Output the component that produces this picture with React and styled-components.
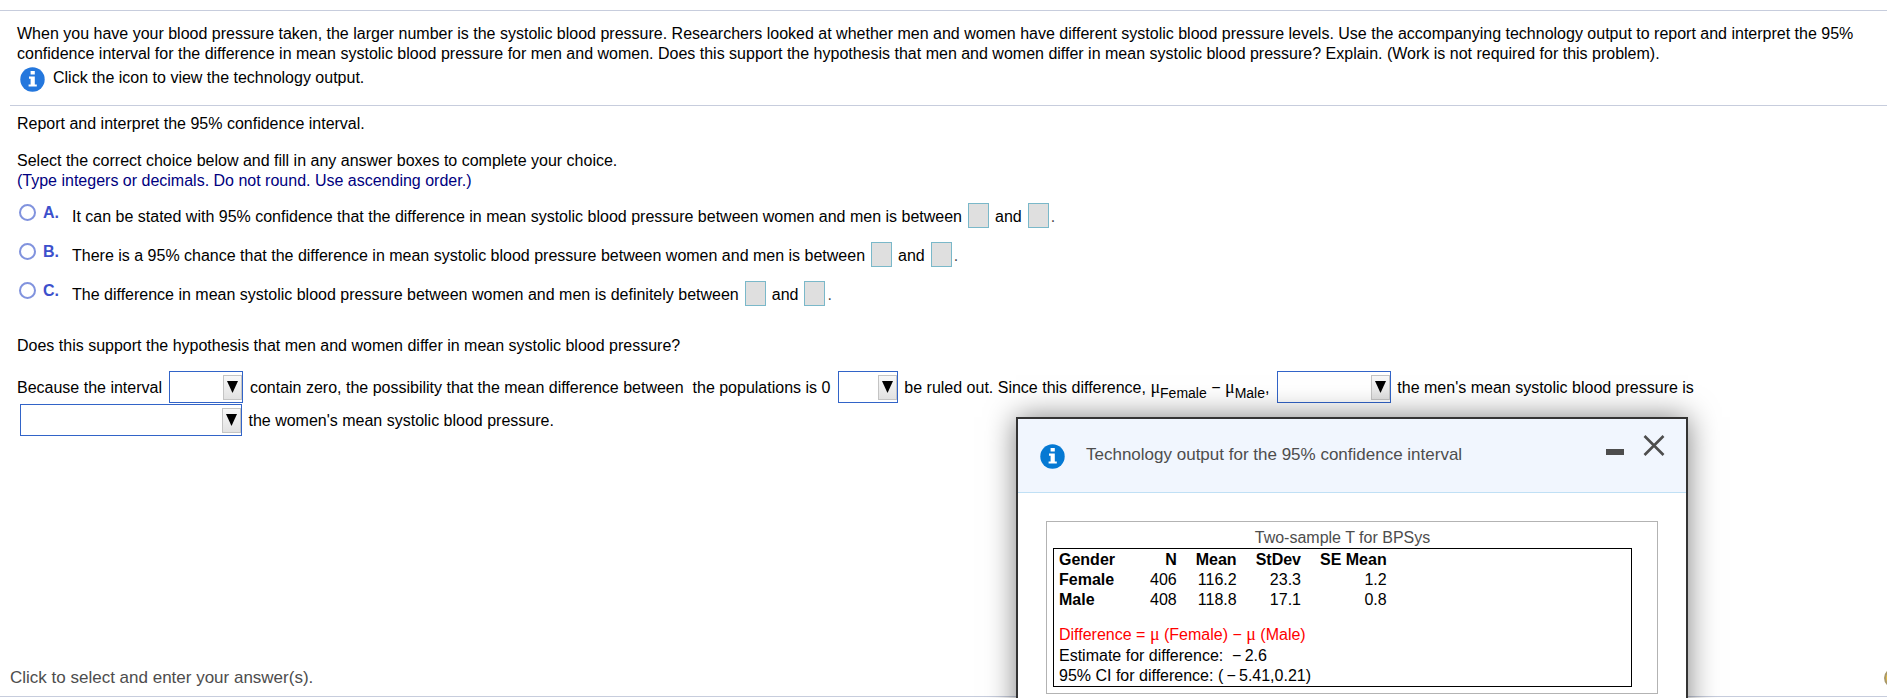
import React, { useState } from 'react';
import styled, { createGlobalStyle } from 'styled-components';

const choices = [
  {
    id: 'A',
    text: 'It can be stated with 95% confidence that the difference in mean systolic blood pressure between women and men is between',
  },
  {
    id: 'B',
    text: 'There is a 95% chance that the difference in mean systolic blood pressure between women and men is between',
  },
  {
    id: 'C',
    text: 'The difference in mean systolic blood pressure between women and men is definitely between',
  },
];

const columns = ['Gender', 'N', 'Mean', 'StDev', 'SE Mean'];

const rows = [
  ['Female', '406', '116.2', '23.3', '1.2'],
  ['Male', '408', '118.8', '17.1', '0.8'],
];

function InfoIcon({ color }) {
  return (
    <svg width="25" height="25" viewBox="0 0 25 25" aria-hidden="true">
      <circle cx="12.5" cy="12.5" r="12.2" fill={color} />
      <path
        d="M10.6 4h4.2v3.6h-4.2zM9 9.6h5.8v7.8h2v2.2H8.6v-2.2h2v-5.6H9z"
        fill="#fff"
      />
    </svg>
  );
}

function Dropdown({ size, label, options }) {
  return (
    <SelectBox $size={size}>
      <select aria-label={label} defaultValue="">
        <option value="" />
        {options.map((option) => (
          <option key={option}>{option}</option>
        ))}
      </select>
      <Arrow>
        <svg width="11" height="12" viewBox="0 0 11 12" aria-hidden="true">
          <path d="M0 0h11L5.5 12z" fill="#000" />
        </svg>
      </Arrow>
    </SelectBox>
  );
}

function OutputDialog({ onClose }) {
  return (
    <Dialog role="dialog" aria-labelledby="dialog-title">
      <DialogHeader>
        <InfoIcon color="#0579d3" />
        <h2 id="dialog-title">
          Technology output for the 95% confidence interval
        </h2>
        <DialogButton aria-label="Minimize">
          <svg width="18" height="24" viewBox="0 0 18 24">
            <path d="M0 14h18v6H0z" fill="#4d4d4d" />
          </svg>
        </DialogButton>
        <DialogButton aria-label="Close" onClick={onClose}>
          <svg width="22" height="24" viewBox="0 0 22 24">
            <path
              d="M1.5 1l19 19M20.5 1l-19 19"
              stroke="#4d4d4d"
              strokeWidth="2.6"
            />
          </svg>
        </DialogButton>
      </DialogHeader>
      <Figure>
        <figcaption>Two-sample T for BPSys</figcaption>
        <Output>
          <Table>
            <thead>
              <tr>
                {columns.map((name) => (
                  <th key={name} scope="col">
                    {name}
                  </th>
                ))}
              </tr>
            </thead>
            <tbody>
              {rows.map(([gender, ...values]) => (
                <tr key={gender}>
                  <th scope="row">{gender}</th>
                  {values.map((value) => (
                    <td key={value}>{value}</td>
                  ))}
                </tr>
              ))}
            </tbody>
          </Table>
          <Difference>
            Difference = <Mu>μ</Mu> (Female) − <Mu>μ</Mu> (Male)
          </Difference>
          <p>Estimate for difference:&nbsp; −&thinsp;2.6</p>
          <p>95% CI for difference: (&thinsp;−&thinsp;5.41,0.21)</p>
        </Output>
      </Figure>
    </Dialog>
  );
}

export default function App() {
  const [choice, setChoice] = useState('');
  const [open, setOpen] = useState(true);

  return (
    <>
      <GlobalStyle />
      <Page>
        <Problem>
          <p>
            When you have your blood pressure taken, the larger number is the
            systolic blood pressure. Researchers looked at whether men and women
            have different systolic blood pressure levels. Use the accompanying
            technology output to report and interpret the 95% confidence
            interval for the difference in mean systolic blood pressure for men
            and women. Does this support the hypothesis that men and women
            differ in mean systolic blood pressure? Explain. (Work is not
            required for this problem).
          </p>
          <IconLink>
            <button aria-label="View output" onClick={() => setOpen(true)}>
              <InfoIcon color="#2477dd" />
            </button>
            <span>Click the icon to view the technology output.</span>
          </IconLink>
        </Problem>

        <Question>
          <p>Report and interpret the 95% confidence interval.</p>
          <Directions>
            <p>
              Select the correct choice below and fill in any answer boxes to
              complete your choice.
            </p>
            <Hint>
              (Type integers or decimals. Do not round. Use ascending order.)
            </Hint>
          </Directions>

          <Choices>
            {choices.map(({ id, text }) => (
              <Choice key={id}>
                <input
                  type="radio"
                  name="choice"
                  id={`choice-${id}`}
                  checked={choice === id}
                  onChange={() => setChoice(id)}
                />
                <Letter htmlFor={`choice-${id}`}>{id}.</Letter>
                <Statement>
                  <label htmlFor={`choice-${id}`}>{text}</label>
                  <Answer aria-label={`${id} lower bound`} />
                  <span>and</span>
                  <Answer aria-label={`${id} upper bound`} />
                  <Period>.</Period>
                </Statement>
              </Choice>
            ))}
          </Choices>

          <p>
            Does this support the hypothesis that men and women differ in mean
            systolic blood pressure?
          </p>
          <Blanks>
            Because the interval{' '}
            <Dropdown
              size={74}
              label="Interval"
              options={['does', 'does not']}
            />{' '}
            contain zero, the possibility that the mean difference between&nbsp;
            the populations is 0{' '}
            <Dropdown size={60} label="Ruled out" options={['can', 'cannot']} />{' '}
            be ruled out. Since this difference, <Mu>μ</Mu>
            <sub>Female</sub> − <Mu>μ</Mu>
            <sub>Male</sub>,{' '}
            <Dropdown
              size={114}
              label="Support"
              options={['suggests', 'is negative']}
            />{' '}
            the men's mean systolic blood pressure is
            <br />
            <Dropdown
              size={222}
              label="Comparison"
              options={['greater than', 'less than']}
            />{' '}
            the women's mean systolic blood pressure.
          </Blanks>
        </Question>

        <Footer>
          <span>Click to select and enter your answer(s).</span>
          <HelpButton aria-label="Help" />
        </Footer>
        {open && <OutputDialog onClose={() => setOpen(false)} />}
      </Page>
    </>
  );
}

const GlobalStyle = createGlobalStyle`
  * {
    box-sizing: border-box;
  }

  body {
    margin: 0;
    background: #ffffff;
    color: #000000;
    font: 16px/20px 'Liberation Sans', Arial, sans-serif;
  }

  p, h2, figure {
    margin: 0;
  }

  button {
    padding: 0;
    border: none;
    background: transparent;
    cursor: pointer;
  }

  svg {
    display: block;
  }
`;

const Page = styled.div`
  display: flex;
  flex-direction: column;
  position: relative;
  min-height: 100vh;
  padding-top: 10px;
  overflow: hidden;
`;

const Problem = styled.section`
  padding: 13px 4px 13px 17px;
  border-top: 1px solid #c7cddd;
`;

const IconLink = styled.div`
  display: flex;
  gap: 8px;
  padding: 3px 3px 0;

  span {
    padding-top: 1px;
  }
`;

const Question = styled.section`
  flex: 1;
  margin-left: 10px;
  padding: 8px 4px 0 7px;
  border-top: 1px solid #c7cddd;
`;

const Directions = styled.div`
  padding-top: 17px;
`;

const Hint = styled.p`
  color: #000080;
`;

const Choices = styled.div`
  display: flex;
  flex-direction: column;
  gap: 14px;
  padding: 12px 0 30px;
`;

const Choice = styled.div`
  display: grid;
  grid-template-columns: 19px 28px 1fr;
  column-gap: 4px;
  align-items: start;
  height: 25px;

  input[type='radio'] {
    appearance: none;
    width: 17px;
    height: 17px;
    margin: 1px 0 0 2px;
    border: 2px solid #8193de;
    border-radius: 50%;

    &:checked {
      background: radial-gradient(#3c50cc 40%, #ffffff 50%);
    }
  }
`;

const Letter = styled.label`
  padding-left: 3px;
  color: #3c50cc;
  font-weight: bold;
`;

const Statement = styled.div`
  display: flex;
  align-items: center;
  gap: 6px;

  label,
  span {
    padding-top: 2px;
  }
`;

const Answer = styled.input`
  width: 21px;
  height: 25px;
  padding: 2px;
  border: 1px solid #7ab8c9;
  background: #dfdfdf;
  font: inherit;
`;

const Period = styled.span`
  margin-left: -4px;
  color: #4d4d4d;
`;

const Blanks = styled.div`
  padding-top: 15px;
  line-height: 32px;

  sub {
    line-height: 0;
    vertical-align: -5px;
    font-size: 14px;
  }
`;

const SelectBox = styled.span`
  display: inline-block;
  position: relative;
  width: ${({ $size }) => $size}px;
  height: 32px;
  margin: 0 2px 0 3px;
  overflow: hidden;
  vertical-align: -10px;

  select {
    appearance: none;
    display: block;
    width: 100%;
    height: 100%;
    padding: 0 22px 0 4px;
    border: 1px solid #3264c8;
    border-radius: 0;
    background: #ffffff;
    font: inherit;
  }
`;

const Arrow = styled.span`
  display: flex;
  justify-content: center;
  position: absolute;
  top: 4px;
  right: 1px;
  width: 19px;
  height: 25px;
  padding-top: 5px;
  border: 1px solid #c4c4c4;
  background: linear-gradient(#f8f8f8, #e2e2e2);
  pointer-events: none;
`;

const Mu = styled.span`
  font-family: 'Liberation Serif', serif;
  font-size: 18px;
  line-height: 0;
`;

const Footer = styled.footer`
  display: flex;
  align-items: center;
  justify-content: space-between;
  height: 39px;
  margin-bottom: 1px;
  padding: 2px 0 0 10px;
  border-bottom: 1px solid #c7cddd;
  color: #4d4d4d;
  font-size: 17px;
`;

const HelpButton = styled.button`
  width: 20px;
  height: 20px;
  margin-right: -17px;
  border: 2px solid #a8986a;
  border-radius: 50%;
  background: #e3bb4a;
`;

const Dialog = styled.div`
  position: absolute;
  top: 417px;
  right: 199px;
  width: 672px;
  border: 2px solid #333333;
  background: #ffffff;
  box-shadow: 0 0 28px rgba(0, 0, 0, 0.5);
`;

const DialogHeader = styled.header`
  display: flex;
  align-items: flex-start;
  height: 74px;
  padding: 16px 21px 0 22px;
  border-bottom: 1px solid #c0e0f5;
  background: #f1f6fe;
  color: #4d4d4d;

  > svg {
    margin-top: 9px;
  }

  h2 {
    flex: 1;
    padding: 10px 0 0 21px;
    font-size: 17px;
    font-weight: normal;
  }

  button + button {
    margin-left: 19px;
  }
`;

const DialogButton = styled.button`
  height: 24px;
`;

const Figure = styled.figure`
  margin: 28px 28px 40px;
  padding: 6px 25px 6px 6px;
  border: 1px solid #b3b3b3;

  figcaption {
    color: #4d4d4d;
    text-align: center;
  }
`;

const Output = styled.div`
  padding: 1px 5px 0;
  border: 1px solid #000000;
`;

const Table = styled.table`
  margin-bottom: 15px;
  border-collapse: collapse;

  th,
  td {
    padding: 0 0 0 19px;
    text-align: right;
  }

  th:first-child {
    padding: 0 16px 0 0;
    text-align: left;
  }
`;

const Difference = styled.p`
  margin-bottom: 1px;
  color: #ff0000;
`;
